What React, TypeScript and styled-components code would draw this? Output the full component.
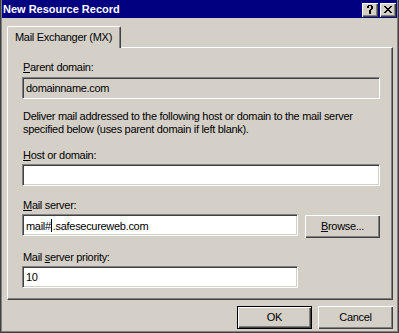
import React from 'react'
import styled, { createGlobalStyle } from 'styled-components'

const GlobalStyle = createGlobalStyle`
  html, body {
    margin: 0;
    padding: 0;
    background: #d4d0c8;
  }
  * {
    box-sizing: border-box;
  }
  body {
    font-family: 'Liberation Sans', Arial, sans-serif;
    font-size: 11px;
    line-height: 13px;
    letter-spacing: -0.3px;
    color: #000;
  }
`

const Window = styled.div`
  width: 399px;
  height: 333px;
  border: 1px solid #404040;
  border-top: none;
  background: #d4d0c8;
  overflow: hidden;
`

const Frame = styled.div`
  height: 100%;
  border: 1px solid #808080;
  border-top: none;
  display: flex;
  flex-direction: column;
`

const TitleBar = styled.div`
  flex: none;
  height: 18px;
  background: #000080;
  color: #fff;
  display: flex;
  align-items: center;
  padding: 0 1px 0 1px;
`

const Title = styled.div`
  flex: 1;
  font-weight: bold;
  letter-spacing: 0;
  padding-top: 1px;
`

const CaptionButtons = styled.div`
  display: flex;
  gap: 2px;
  padding-top: 1px;
`

const CaptionButton = styled.div`
  width: 16px;
  height: 14px;
  background: #d4d0c8;
  box-shadow: inset 1px 1px #fff, inset -1px -1px #404040, inset -2px -2px #808080;
  display: flex;
  align-items: center;
  justify-content: center;
  svg {
    display: block;
    shape-rendering: crispEdges;
  }
`

const Body = styled.div`
  flex: 1;
  padding: 8px 4px 0 5px;
  display: flex;
  flex-direction: column;
`

const TabStrip = styled.div`
  display: flex;
  margin-bottom: -1px;
`

const Tab = styled.div`
  position: relative;
  z-index: 1;
  width: 114px;
  height: 22px;
  padding: 4px 0 0 7px;
  background: #d4d0c8;
  border-top: 1px solid #fff;
  border-left: 1px solid #fff;
  border-right: 1px solid #404040;
  border-radius: 2px 2px 0 0;
  box-shadow: inset -1px 0 #808080;
  white-space: nowrap;
`

const Panel = styled.div`
  height: 253px;
  padding: 13px 12px 0 14px;
  border-top: 1px solid #fff;
  border-left: 1px solid #fff;
  border-right: 1px solid #404040;
  border-bottom: 1px solid #404040;
  box-shadow: inset -1px -1px #808080;
  display: flex;
  flex-direction: column;
`

const Label = styled.div<{ $top?: number }>`
  flex: none;
  margin-top: ${p => p.$top ?? 0}px;
  padding-left: 1px;
  height: 13px;
  white-space: nowrap;
`

const Description = styled.p<{ $top: number }>`
  flex: none;
  margin: ${p => p.$top}px 0 0 0;
  padding-left: 1px;
`

const Key = styled.span`
  text-decoration: underline;
  text-underline-offset: 1px;
`

const Field = styled.div<{ $readOnly?: boolean; $width?: number; $gap?: number }>`
  flex: none;
  margin-top: ${p => p.$gap ?? 2}px;
  height: 22px;
  width: ${p => (p.$width ? `${p.$width}px` : '100%')};
  padding: 4px 0 0 3px;
  background: ${p => (p.$readOnly ? '#d4d0c8' : '#fff')};
  border: 1px solid;
  border-color: #808080 #fff #fff #808080;
  box-shadow: inset 1px 1px #404040, inset -1px -1px #d4d0c8;
  white-space: nowrap;
  overflow: hidden;
`

const Caret = styled.span`
  display: inline-block;
  width: 1px;
  height: 13px;
  margin: 0 1px -2px 0;
  background: #000;
`

const Row = styled.div`
  flex: none;
  margin-top: 2px;
  display: flex;
  align-items: flex-start;
  gap: 7px;
  & > ${Field} {
    flex: 1;
    width: auto;
    margin-top: 0;
  }
`

const Button = styled.button<{ $default?: boolean; $offset?: number }>`
  flex: none;
  width: 75px;
  height: 23px;
  margin-top: ${p => p.$offset ?? 0}px;
  padding: 0;
  font: inherit;
  letter-spacing: inherit;
  color: #000;
  background: #d4d0c8;
  border: ${p => (p.$default ? '1px solid #000' : 'none')};
  box-shadow: inset 1px 1px #fff, inset -1px -1px #404040, inset -2px -2px #808080;
  text-align: center;
`

const ButtonBar = styled.div`
  margin-top: 6px;
  display: flex;
  justify-content: flex-end;
  gap: 6px;
`

const HelpGlyph = () => (
  <svg width="6" height="9" viewBox="0 0 6 9">
    <path
      d="M1 0h4v1h1v3h-1v1h-1v2h-2v-2h1v-1h1v-3h-2v2h-2v-2h1z M2 7h2v2h-2z"
      fill="#000"
    />
  </svg>
)

const CloseGlyph = () => (
  <svg width="8" height="7" viewBox="0 0 8 7">
    <path
      d="M0 0h2v1h1v1h2v-1h1v-1h2v1h-1v1h-1v1h-1v1h1v1h1v1h1v1h-2v-1h-1v-1h-2v1h-1v1h-2v-1h1v-1h1v-1h1v-1h-1v-1h-1v-1h-1z"
      fill="#000"
    />
  </svg>
)

const App = () => {
  return (
    <>
      <GlobalStyle />
      <Window>
        <Frame>
          <TitleBar>
            <Title>New Resource Record</Title>
            <CaptionButtons>
              <CaptionButton>
                <HelpGlyph />
              </CaptionButton>
              <CaptionButton>
                <CloseGlyph />
              </CaptionButton>
            </CaptionButtons>
          </TitleBar>
          <Body>
            <TabStrip>
              <Tab>Mail Exchanger (MX)</Tab>
            </TabStrip>
            <Panel>
              <Label>
                <Key>P</Key>arent domain:
              </Label>
              <Field $readOnly $gap={3}>domainname.com</Field>

              <Description $top={11}>
                Deliver mail addressed to the following host or domain to the mail server
                <br />
                specified below (uses parent domain if left blank).
              </Description>

              <Label $top={13}>
                <Key>H</Key>ost or domain:
              </Label>
              <Field />

              <Label $top={13}>
                <Key>M</Key>ail server:
              </Label>
              <Row>
                <Field>
                  mail#<Caret />.safesecureweb.com
                </Field>
                <Button $offset={1}>
                  <Key>B</Key>rowse...
                </Button>
              </Row>

              <Label $top={13}>
                Mail <Key>s</Key>erver priority:
              </Label>
              <Field $width={276}>10</Field>
            </Panel>
            <ButtonBar>
              <Button $default>OK</Button>
              <Button>Cancel</Button>
            </ButtonBar>
          </Body>
        </Frame>
      </Window>
    </>
  )
}

export default App
